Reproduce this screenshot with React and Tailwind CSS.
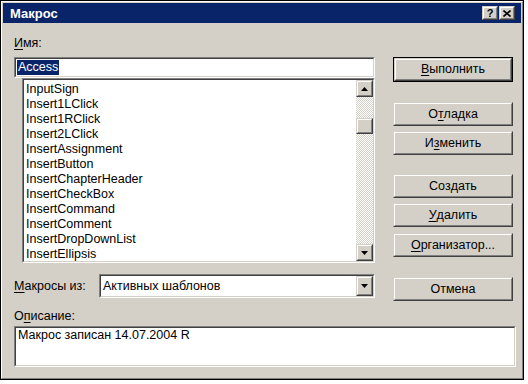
const items = [
  "InputSign",
  "Insert1LClick",
  "Insert1RClick",
  "Insert2LClick",
  "InsertAssignment",
  "InsertButton",
  "InsertChapterHeader",
  "InsertCheckBox",
  "InsertCommand",
  "InsertComment",
  "InsertDropDownList",
  "InsertEllipsis",
]

function Raised({ className = "", children }) {
  return (
    <div className={`border border-t-[#d4d0c8] border-l-[#d4d0c8] border-r-[#404040] border-b-[#404040] bg-[#d4d0c8] ${className}`}>
      <div className="w-full h-full border border-t-white border-l-white border-r-[#808080] border-b-[#808080] flex items-center justify-center">
        {children}
      </div>
    </div>
  )
}

function Sunken({ className = "", children }) {
  return (
    <div className={`border border-t-[#808080] border-l-[#808080] border-r-white border-b-white ${className}`}>
      <div className="w-full h-full border border-t-[#404040] border-l-[#404040] border-r-[#d4d0c8] border-b-[#d4d0c8] bg-white flex overflow-hidden">
        {children}
      </div>
    </div>
  )
}

function U({ children }) {
  return <span className="underline underline-offset-[2px]">{children}</span>
}

function Arrow({ down }) {
  return (
    <svg width="7" height="4" viewBox="0 0 7 4">
      {down ? <path d="M0 0h7L3.5 4z" fill="#000" /> : <path d="M0 4h7L3.5 0z" fill="#000" />}
    </svg>
  )
}

function Btn({ children, def, className = "" }) {
  if (def) {
    return (
      <div className={`w-[120px] h-[25px] border border-black ${className}`}>
        <Raised className="w-full h-full">{children}</Raised>
      </div>
    )
  }
  return <Raised className={`w-[120px] h-[24px] ${className}`}>{children}</Raised>
}

const dither = "bg-[repeating-conic-gradient(#d4d0c8_0_25%,#ffffff_0_50%)] bg-[length:2px_2px]"

export default function App() {
  return (
    <div className="w-[528px] h-[384px] bg-white font-['Liberation_Sans',Arial,sans-serif] text-[12.5px] text-black leading-[15px]">
      <div className="w-[524px] h-[380px] border border-black">
        <div className="w-full h-full border border-t-white border-l-white border-r-[#808080] border-b-[#808080] bg-[#d4d0c8] p-px flex flex-col">
          {/* title bar */}
          <div className="h-[20px] bg-[#0a246a] flex items-center justify-between pl-[7px] pr-[6px]">
            <span className="text-white font-bold text-[13px]">Макрос</span>
            <div className="flex gap-[1px]">
              <Raised className="w-[16px] h-[14px]">
                <span className="font-bold text-[11px] leading-none">?</span>
              </Raised>
              <Raised className="w-[16px] h-[14px]">
                <svg width="8" height="7" viewBox="0 0 8 7">
                  <path d="M0.5 0.5l7 6M7.5 0.5l-7 6" stroke="#000" strokeWidth="1.6" />
                </svg>
              </Raised>
            </div>
          </div>

          <div className="flex pl-[11px] pt-[13px]">
            {/* left column */}
            <div className="w-[361px] flex flex-col">
              <div className="h-[15px] mb-[6px]">
                <U>И</U>мя:
              </div>
              <Sunken className="h-[21px]">
                <div className="pl-[1px] flex items-center">
                  <span className="bg-[#0a246a] text-white px-[1px] leading-[15px]">Access</span>
                </div>
              </Sunken>
              <div className="pl-[8px]">
                <Sunken className="h-[185px]">
                  <div className="flex-1 pt-[2px] pl-[2px]">
                    {items.map((it) => (
                      <div key={it} className="h-[15px]">{it}</div>
                    ))}
                  </div>
                  <div className="w-[17px] flex flex-col">
                    <Raised className="w-[17px] h-[17px]"><Arrow /></Raised>
                    <div className={`h-[21px] ${dither}`} />
                    <Raised className="w-[17px] h-[16px]" />
                    <div className={`flex-1 ${dither}`} />
                    <Raised className="w-[17px] h-[17px]"><Arrow down /></Raised>
                  </div>
                </Sunken>
              </div>
              <div className="flex items-center mt-[11px]">
                <div className="w-[85px]">
                  <U>М</U>акросы из:
                </div>
                <Sunken className="w-[276px] h-[24px]">
                  <div className="flex-1 pl-[2px] flex items-center">Активных шаблонов</div>
                  <Raised className="w-[17px] h-full"><Arrow down /></Raised>
                </Sunken>
              </div>
            </div>

            {/* right column */}
            <div className="ml-[18px] pt-[21px] flex flex-col">
              <Btn def><U>В</U>ыполнить</Btn>
              <Btn className="mt-[20px]">О<U>т</U>ладка</Btn>
              <Btn className="mt-[5px]">И<U>з</U>менить</Btn>
              <Btn className="mt-[19px]">Соз<U>д</U>ать</Btn>
              <Btn className="mt-[5px]"><U>У</U>далить</Btn>
              <Btn className="mt-[6px]"><U>О</U>рганизатор...</Btn>
              <Btn className="mt-[20px]">Отмена</Btn>
            </div>
          </div>

          <div className="pl-[11px] mt-[8px]">
            <div className="h-[15px]">
              О<U>п</U>исание:
            </div>
            <Sunken className="w-[502px] h-[41px] mt-[2px]">
              <div className="pl-[2px]">Макрос записан 14.07.2004 R</div>
            </Sunken>
          </div>
        </div>
      </div>
    </div>
  )
}
